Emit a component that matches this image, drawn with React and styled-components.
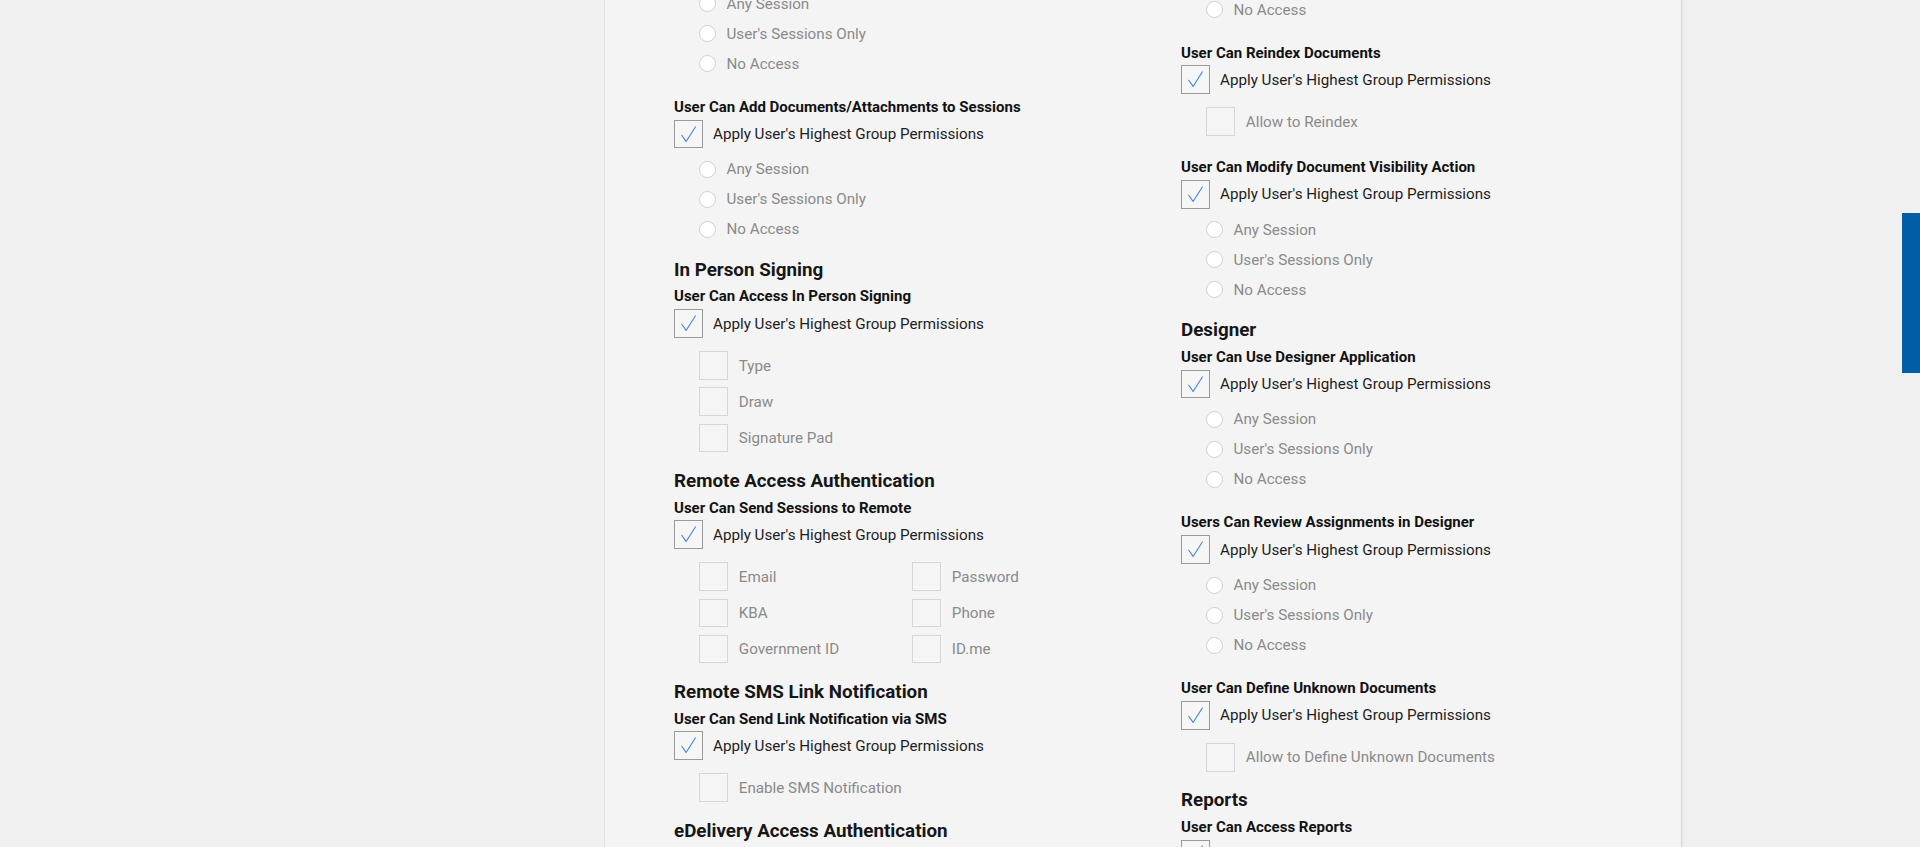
import React from 'react';
import styled, { createGlobalStyle } from 'styled-components';

const Global = createGlobalStyle`
  html, body { margin: 0; padding: 0; height: 100%; overflow: hidden; background: #f0f0f0; }
  body { font-family: Roboto, "Noto Sans", Arial, sans-serif; -webkit-font-smoothing: antialiased; }
  * { box-sizing: border-box; }
`;

const Page = styled.div`
  height: 847px;
  overflow: hidden;
  display: flex;
  background: #f0f0f0;
`;

const Panel = styled.main`
  margin-left: 604px;
  width: 1078px;
  height: 100%;
  overflow: hidden;
  background: #f4f4f4;
  border-left: 1px solid #e0e0e0;
  border-right: 1px solid #d9d9d9;
  box-shadow: 1px 0 0 #e6e6e6;
  padding-left: 69px;
  display: grid;
  grid-template-columns: 507px 1fr;
  align-items: start;
`;

const Column = styled.div`
  display: flex;
  flex-direction: column;
  margin-top: ${p => p.$scroll}px;
`;

const Section = styled.section`
  display: flex;
  flex-direction: column;
  & + & { margin-top: 18.5px; }
`;

const SectionTitle = styled.h2`
  margin: 0 0 7.6px;
  font-size: 18.8px;
  line-height: 21px;
  font-weight: 700;
  color: #161616;
`;

const Block = styled.div`
  display: flex;
  flex-direction: column;
  & + & { margin-top: 23px; }
`;

const BlockTitle = styled.h3`
  margin: 0;
  font-size: 15px;
  line-height: 16px;
  font-weight: 700;
  color: #111;
`;

const ApplyRow = styled.label`
  margin-top: 4.8px;
  display: flex;
  align-items: center;
  height: 28.8px;
  gap: 10.2px;
`;

const Box = styled.span`
  width: 28.8px;
  height: 28.8px;
  flex: none;
  border: 1px solid ${p => (p.$checked ? '#9a9a9a' : '#d6d6d6')};
  background: ${p => (p.$checked ? '#f6f6f6' : '#f5f5f5')};
  display: flex;
  align-items: center;
  justify-content: center;
`;

const ApplyText = styled.span`
  font-size: 15.2px;
  color: #1d1d1d;
  white-space: nowrap;
`;

const RadioList = styled.div`
  margin-top: 9px;
  padding-left: 25px;
  display: flex;
  flex-direction: column;
  gap: 6px;
`;

const RadioRow = styled.div`
  height: 24px;
  display: flex;
  align-items: center;
  gap: 10.5px;
`;

const Radio = styled.span`
  width: 17px;
  height: 17px;
  flex: none;
  border-radius: 50%;
  border: 1px solid #cfcfcf;
  background: #fff;
`;

const OptionText = styled.span`
  font-size: 15.2px;
  color: #8a8a8a;
  white-space: nowrap;
`;

const CheckList = styled.div`
  margin-top: 13.2px;
  padding-left: 25px;
  display: grid;
  grid-template-columns: ${p => (p.$cols === 2 ? '213px 213px' : '1fr')};
  grid-template-rows: ${p => (p.$rows ? `repeat(${p.$rows}, 28.8px)` : 'none')};
  grid-auto-flow: ${p => (p.$cols === 2 ? 'column' : 'row')};
  grid-auto-rows: 28.8px;
  row-gap: 7.4px;
`;

const CheckRow = styled.div`
  display: flex;
  align-items: center;
  gap: 11px;
`;

const SideTab = styled.div`
  position: fixed;
  right: 0;
  top: 213px;
  width: 18px;
  height: 160px;
  background: #005ea6;
`;

const Check = () => (
  <svg width="29" height="29" viewBox="0 0 29 29" fill="none">
    <path d="M7.3 15.3 L12 22 L22 6.3" stroke="#3f86d8" strokeWidth="1.2" strokeLinecap="round" strokeLinejoin="round" />
  </svg>
);

const RADIOS = ['Any Session', "User's Sessions Only", 'No Access'];

function Permission({ title, radios, checks, cols }) {
  return (
    <Block>
      <BlockTitle>{title}</BlockTitle>
      <ApplyRow>
        <Box $checked><Check /></Box>
        <ApplyText>Apply User's Highest Group Permissions</ApplyText>
      </ApplyRow>
      {radios && (
        <RadioList>
          {RADIOS.map(r => (
            <RadioRow key={r}>
              <Radio />
              <OptionText>{r}</OptionText>
            </RadioRow>
          ))}
        </RadioList>
      )}
      {checks && (
        <CheckList $cols={cols} $rows={cols === 2 ? Math.ceil(checks.length / 2) : 0}>
          {checks.map(c => (
            <CheckRow key={c}>
              <Box />
              <OptionText>{c}</OptionText>
            </CheckRow>
          ))}
        </CheckList>
      )}
    </Block>
  );
}

const LEFT = [
  {
    title: null,
    items: [
      { title: 'User Can Cancel Sessions', radios: true },
      { title: 'User Can Add Documents/Attachments to Sessions', radios: true },
    ],
  },
  {
    title: 'In Person Signing',
    items: [{ title: 'User Can Access In Person Signing', checks: ['Type', 'Draw', 'Signature Pad'] }],
  },
  {
    title: 'Remote Access Authentication',
    items: [
      {
        title: 'User Can Send Sessions to Remote',
        checks: ['Email', 'KBA', 'Government ID', 'Password', 'Phone', 'ID.me'],
        cols: 2,
      },
    ],
  },
  {
    title: 'Remote SMS Link Notification',
    items: [{ title: 'User Can Send Link Notification via SMS', checks: ['Enable SMS Notification'] }],
  },
  {
    title: 'eDelivery Access Authentication',
    items: [{ title: 'User Can Send Sessions to eDelivery', checks: ['Email'] }],
  },
];

const RIGHT = [
  {
    title: null,
    items: [
      { title: 'User Can Delete Documents', radios: true },
      { title: 'User Can Reindex Documents', checks: ['Allow to Reindex'] },
      { title: 'User Can Modify Document Visibility Action', radios: true },
    ],
  },
  {
    title: 'Designer',
    items: [
      { title: 'User Can Use Designer Application', radios: true },
      { title: 'Users Can Review Assignments in Designer', radios: true },
      { title: 'User Can Define Unknown Documents', checks: ['Allow to Define Unknown Documents'] },
    ],
  },
  {
    title: 'Reports',
    items: [{ title: 'User Can Access Reports', radios: true }],
  },
];

function Sections({ data }) {
  return data.map((s, i) => (
    <Section key={i}>
      {s.title && <SectionTitle>{s.title}</SectionTitle>}
      {s.items.map(p => (
        <Permission key={p.title} {...p} />
      ))}
    </Section>
  ));
}

export default function App() {
  return (
    <>
      <Global />
      <Page>
        <Panel>
          <Column $scroll={-66.8}>
            <Sections data={LEFT} />
          </Column>
          <Column $scroll={-121}>
            <Sections data={RIGHT} />
          </Column>
        </Panel>
      </Page>
      <SideTab />
    </>
  );
}
